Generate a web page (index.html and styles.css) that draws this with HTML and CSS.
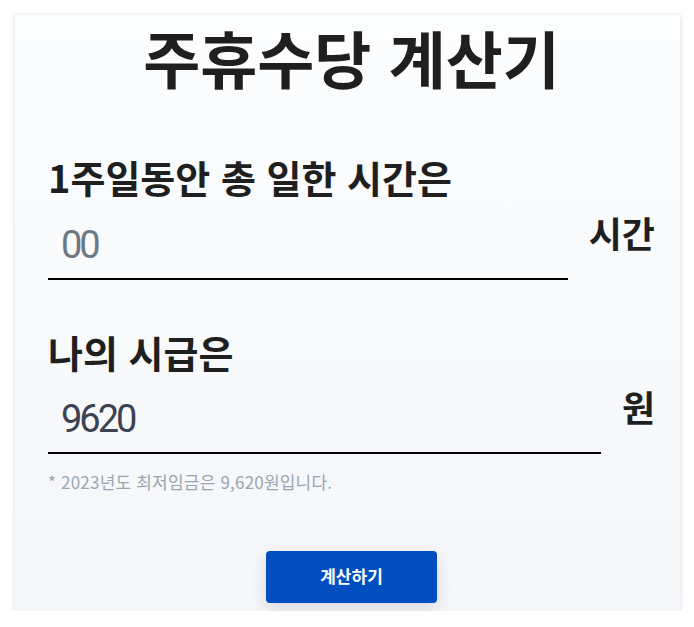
FILE: index.html
```html
<!DOCTYPE html>
<html lang="ko">
<head>
<meta charset="utf-8">
<link rel="stylesheet" href="styles.css">
</head>
<body>
<main class="card">
  <h1 class="title">주휴수당 계산기</h1>
  <section class="field field-hours">
    <label class="label" for="hours">1주일동안 총 일한 시간은</label>
    <div class="input-row">
      <input class="input" id="hours" type="text" placeholder="00">
      <span class="unit">시간</span>
    </div>
  </section>
  <section class="field field-wage">
    <label class="label" for="wage">나의 시급은</label>
    <div class="input-row">
      <input class="input" id="wage" type="text" value="9620">
      <span class="unit">원</span>
    </div>
    <p class="note">* 2023년도 최저임금은 9,620원입니다.</p>
  </section>
  <div class="actions">
    <button class="btn" type="button">계산하기</button>
  </div>
</main>
</body>
</html>
```
FILE: styles.css
```css
* { box-sizing: border-box; }
html, body { margin: 0; padding: 0; background: #ffffff; }
body {
  font-family: "Noto Sans CJK KR", "Noto Sans", sans-serif;
  color: #1f1f1f;
  padding: 15px 14px 0 15px;
}
.card {
  width: 665px;
  height: 596px;
  background: linear-gradient(180deg, #fcfdfe 0%, #f4f6f9 100%);
  box-shadow: 0 1px 5px rgba(0, 0, 0, 0.16);
  padding: 0 25px 0 33px;
  display: flex;
  flex-direction: column;
}
.title {
  margin: 6px 0 0 0;
  text-align: center;
  font-size: 62px;
  line-height: 72px;
  font-weight: 700;
  color: #1f1f1f;
}
.field { display: flex; flex-direction: column; }
.field-hours { margin-top: 61px; }
.field-wage { margin-top: 49px; }
.label {
  font-size: 38px;
  font-weight: 700;
  line-height: 46px;
  color: #1f1f1f;
}
.input-row {
  display: flex;
  align-items: flex-end;
  margin-top: 11px;
}
.field-hours .input-row { margin-top: 12px; }
.input {
  flex: 1;
  min-width: 0;
  height: 57px;
  border: none;
  border-bottom: 2px solid #000;
  background: transparent;
  font-family: "Roboto", "Liberation Sans", sans-serif;
  font-size: 38px;
  line-height: 44px;
  letter-spacing: -3px;
  padding: 0 0 11px 13px;
  color: #3b4350;
  outline: none;
}
.input::placeholder { color: #6c7886; opacity: 1; }
.unit {
  font-size: 36px;
  font-weight: 700;
  line-height: 40px;
  margin: 0 0 28px 21px;
  color: #1f1f1f;
}
.note {
  margin: 18px 0 0 0;
  font-size: 17px;
  line-height: 20px;
  letter-spacing: 0.2px;
  color: #9ba5b0;
}
.actions {
  display: flex;
  justify-content: center;
  margin-top: auto;
  margin-bottom: 8px;
}
.btn {
  width: 171px;
  height: 52px;
  background: #004ec0;
  color: #ffffff;
  border: none;
  border-radius: 4px;
  font-family: "Noto Sans CJK KR", sans-serif;
  font-size: 17px;
  font-weight: 700;
  padding: 0 0 3px 0;
  box-shadow: 0 6px 16px rgba(0, 0, 0, 0.12);
}
```
